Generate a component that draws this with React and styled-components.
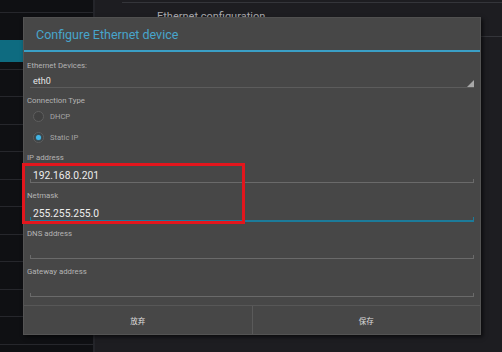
import React from 'react';
import styled, { createGlobalStyle } from 'styled-components';

const Global = createGlobalStyle`
  html, body {
    margin: 0;
    padding: 0;
    background: #1d1d21;
  }
  * { box-sizing: border-box; }
`;

const Screen = styled.div`
  position: relative;
  display: flex;
  width: 502px;
  height: 352px;
  overflow: hidden;
  font-family: Roboto, "Noto Sans CJK SC", sans-serif;
`;

const Sidebar = styled.div`
  width: 95px;
  background: #0f1013;
  border-right: 2px solid #24252a;
  display: flex;
  flex-direction: column;
`;

const SideRow = styled.div`
  flex: none;
  height: ${p => p.h}px;
  background: ${p => (p.active ? '#0e6b80' : 'transparent')};
  border-bottom: ${p => (p.line ? '1px solid #26272c' : 'none')};
`;

const Main = styled.div`
  flex: 1;
  display: flex;
  flex-direction: column;
  padding-top: 2px;
`;

const TopLine = styled.div`
  height: 1px;
  margin-left: 27px;
  background: #34353a;
`;

const PanelTitle = styled.div`
  height: 34px;
  padding: 7px 0 0 62px;
  font-size: 11px;
  color: #a9a9ad;
  border-bottom: 1px solid #34353a;
`;

const Dialog = styled.div`
  position: absolute;
  left: 23px;
  top: 17px;
  width: 458px;
  height: 318px;
  background: #474747;
  border: 1px solid #545454;
  border-top-color: #505050;
  box-shadow: 2px 2px 4px rgba(0, 0, 0, 0.6);
  display: flex;
  flex-direction: column;
`;

const Title = styled.div`
  height: 34px;
  display: flex;
  align-items: center;
  padding-left: 12px;
  font-size: 12.5px;
  color: #47a5cb;
  border-bottom: 2px solid #3a9fc6;
`;

const Body = styled.div`
  flex: 1;
  padding: 8px 6px 0 3px;
  display: flex;
  flex-direction: column;
`;

const Label = styled.div`
  height: 11px;
  line-height: 11px;
  font-size: 7.8px;
  color: #b4b4b4;
  margin-top: ${p => p.mt || 0}px;
`;

const Spinner = styled.div`
  position: relative;
  height: 17px;
  margin: 0 0 0 3px;
  padding: 4px 0 0 3px;
  display: flex;
  align-items: center;
  font-size: 9px;
  color: #e6e6e6;
  border-bottom: 1px solid #5c5c5c;

  &::after {
    content: '';
    position: absolute;
    right: 0;
    bottom: 0;
    border-left: 7px solid transparent;
    border-bottom: 7px solid #a8a8a8;
  }
`;

const RadioRow = styled.div`
  height: 21px;
  display: flex;
  align-items: center;
  gap: 6px;
  padding-left: 6px;
  font-size: 7.6px;
  color: #a6a6a6;
`;

const Radio = styled.span`
  width: 11px;
  height: 11px;
  border-radius: 50%;
  border: 1px solid #5e5e5e;
  background: #404040;
  display: flex;
  align-items: center;
  justify-content: center;

  &::after {
    content: '';
    width: 5px;
    height: 5px;
    border-radius: 50%;
    background: ${p => (p.checked ? '#43b6e6' : 'transparent')};
    box-shadow: ${p => (p.checked ? '0 0 2px #2b8fb8' : 'none')};
  }
`;

const Field = styled.div`
  margin-bottom: ${p => (p.last ? 0 : p.focused ? 6 : 7)}px;
`;

const Input = styled.div`
  position: relative;
  height: ${p => (p.focused ? 21 : 20)}px;
  margin-left: 3px;
  padding: 6px 0 0 3px;
  line-height: 13px;
  font-size: 10.3px;
  color: #ededed;
  border-bottom: ${p => (p.focused ? '2px solid #1c7b9a' : '1px solid #6a6a6a')};

  &::before,
  &::after {
    content: '';
    position: absolute;
    bottom: 0;
    width: 1px;
    height: 3px;
    background: ${p => (p.focused ? '#1c7b9a' : '#6a6a6a')};
  }
  &::before { left: 0; }
  &::after { right: 0; }
`;

const Buttons = styled.div`
  height: 29px;
  display: flex;
  border-top: 1px solid #575757;
`;

const Button = styled.div`
  flex: 1;
  display: flex;
  align-items: center;
  justify-content: center;
  font-size: 7.5px;
  color: #dcdcdc;
  & + & { border-left: 1px solid #5a5a5a; }
`;

const Highlight = styled.div`
  position: absolute;
  left: 22px;
  top: 163px;
  width: 223px;
  height: 61px;
  border: 3px solid #e3161d;
`;

const sideRows = [
  { h: 13, line: true },
  { h: 27 },
  { h: 22, active: true },
  { h: 8, line: true },
  ...Array.from({ length: 10 }, (_, i) => ({ h: i % 2 ? 28 : 27, line: true })),
];

const fields = [
  { label: 'IP address', value: '192.168.0.201' },
  { label: 'Netmask', value: '255.255.255.0', focused: true },
  { label: 'DNS address', value: '' },
  { label: 'Gateway address', value: '', last: true },
];

export default function App() {
  return (
    <>
      <Global />
      <Screen>
        <Sidebar>
          {sideRows.map((r, i) => (
            <SideRow key={i} {...r} />
          ))}
        </Sidebar>
        <Main>
          <TopLine />
          <PanelTitle>Ethernet configuration</PanelTitle>
        </Main>

        <Dialog>
          <Title>Configure Ethernet device</Title>
          <Body>
            <Label>Ethernet Devices:</Label>
            <Spinner>eth0</Spinner>
            <Label mt={7}>Connection Type</Label>
            <RadioRow>
              <Radio />
              DHCP
            </RadioRow>
            <RadioRow>
              <Radio checked />
              Static IP
            </RadioRow>
            <div style={{ height: 4 }} />
            {fields.map(f => (
              <Field key={f.label} focused={f.focused} last={f.last}>
                <Label>{f.label}</Label>
                <Input focused={f.focused}>{f.value}</Input>
              </Field>
            ))}
          </Body>
          <Buttons>
            <Button>放弃</Button>
            <Button>保存</Button>
          </Buttons>
        </Dialog>

        <Highlight />
      </Screen>
    </>
  );
}
